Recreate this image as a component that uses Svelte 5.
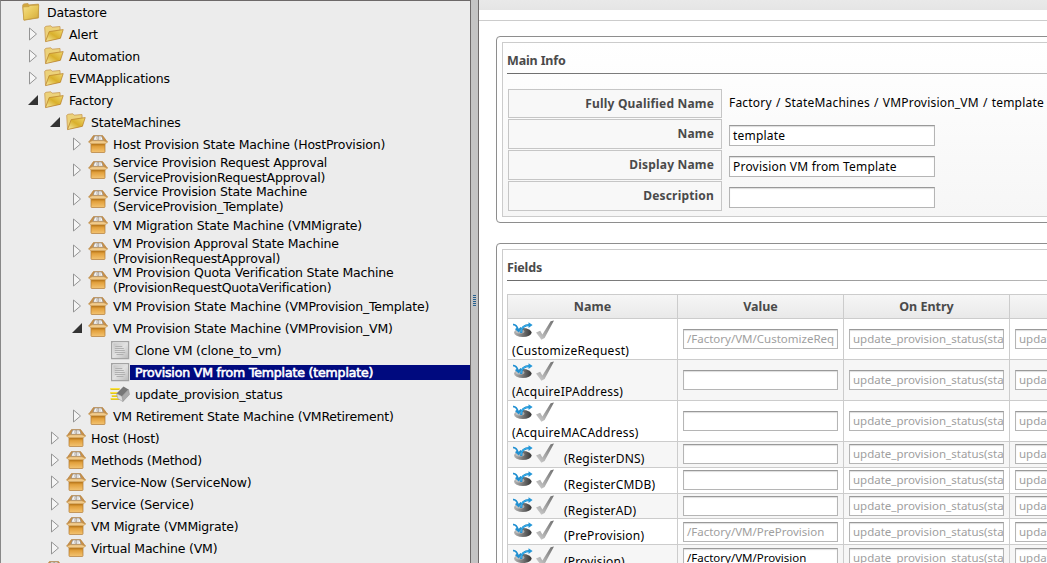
<script>
  const tree = [
    { level: 0, icon: 'closed', text: ['Datastore'] },
    { level: 1, icon: 'open', arrow: 'right', text: ['Alert'] },
    { level: 1, icon: 'open', arrow: 'right', text: ['Automation'] },
    { level: 1, icon: 'open', arrow: 'right', text: ['EVMApplications'] },
    { level: 1, icon: 'open', arrow: 'down', text: ['Factory'] },
    { level: 2, icon: 'open', arrow: 'down', text: ['StateMachines'] },
    { level: 3, icon: 'box', arrow: 'right', text: ['Host Provision State Machine (HostProvision)'] },
    { level: 3, icon: 'box', arrow: 'right', text: ['Service Provision Request Approval', '(ServiceProvisionRequestApproval)'] },
    { level: 3, icon: 'box', arrow: 'right', text: ['Service Provision State Machine', '(ServiceProvision_Template)'] },
    { level: 3, icon: 'box', arrow: 'right', text: ['VM Migration State Machine (VMMigrate)'] },
    { level: 3, icon: 'box', arrow: 'right', text: ['VM Provision Approval State Machine', '(ProvisionRequestApproval)'] },
    { level: 3, icon: 'box', arrow: 'right', text: ['VM Provision Quota Verification State Machine', '(ProvisionRequestQuotaVerification)'] },
    { level: 3, icon: 'box', arrow: 'right', text: ['VM Provision State Machine (VMProvision_Template)'] },
    { level: 3, icon: 'box', arrow: 'down', text: ['VM Provision State Machine (VMProvision_VM)'] },
    { level: 4, icon: 'instance', text: ['Clone VM (clone_to_vm)'] },
    { level: 4, icon: 'instance', selected: true, text: ['Provision VM from Template (template)'] },
    { level: 4, icon: 'method', text: ['update_provision_status'] },
    { level: 3, icon: 'box', arrow: 'right', text: ['VM Retirement State Machine (VMRetirement)'] },
    { level: 2, icon: 'box', arrow: 'right', text: ['Host (Host)'] },
    { level: 2, icon: 'box', arrow: 'right', text: ['Methods (Method)'] },
    { level: 2, icon: 'box', arrow: 'right', text: ['Service-Now (ServiceNow)'] },
    { level: 2, icon: 'box', arrow: 'right', text: ['Service (Service)'] },
    { level: 2, icon: 'box', arrow: 'right', text: ['VM Migrate (VMMigrate)'] },
    { level: 2, icon: 'box', arrow: 'right', text: ['Virtual Machine (VM)'] },
    { level: 1, icon: 'box', text: [''] }
  ];

  const info = [
    { label: 'Fully Qualified Name', text: 'Factory / StateMachines / VMProvision_VM / template' },
    { label: 'Name', value: 'template' },
    { label: 'Display Name', value: 'Provision VM from Template' },
    { label: 'Description', value: '' }
  ];

  const fields = [
    { name: '(CustomizeRequest)', value: '/Factory/VM/CustomizeReq', h: 41 },
    { name: '(AcquireIPAddress)', value: '', h: 41 },
    { name: '(AcquireMACAddress)', value: '', h: 41 },
    { name: '(RegisterDNS)', value: '', h: 26 },
    { name: '(RegisterCMDB)', value: '', h: 26 },
    { name: '(RegisterAD)', value: '', h: 25 },
    { name: '(PreProvision)', value: '/Factory/VM/PreProvision', h: 26, low: true },
    { name: '(Provision)', value: '/Factory/VM/Provision', own: true, h: 26, low: true }
  ];
  const entry = 'update_provision_status(sta';
</script>

<svg class="defs" width="0" height="0">
  <defs>
    <linearGradient id="gold" x1="0" y1="0" x2="1" y2="1">
      <stop offset="0" stop-color="#f5e08a" /><stop offset=".5" stop-color="#e8c85a" /><stop offset="1" stop-color="#d2a93a" />
    </linearGradient>
    <linearGradient id="flap" x1="0" y1="1" x2="1" y2="0">
      <stop offset="0" stop-color="#f8eda6" /><stop offset=".5" stop-color="#d9b02c" /><stop offset="1" stop-color="#f0d870" />
    </linearGradient>
    <linearGradient id="carton" x1="0" y1="0" x2="0" y2="1">
      <stop offset="0" stop-color="#c98722" /><stop offset=".45" stop-color="#e5a543" /><stop offset="1" stop-color="#f3c473" />
    </linearGradient>
    <linearGradient id="silver" x1="0" y1="0" x2="1" y2="1">
      <stop offset="0" stop-color="#bdbdbd" /><stop offset=".5" stop-color="#e2e2e2" /><stop offset="1" stop-color="#b9b9b9" />
    </linearGradient>
    <linearGradient id="disc" x1="0" y1="0" x2="1" y2="0">
      <stop offset="0" stop-color="#b5b5b5" /><stop offset=".5" stop-color="#777" /><stop offset="1" stop-color="#353535" />
    </linearGradient>
    <linearGradient id="tick" x1="0" y1="1" x2="1" y2="0">
      <stop offset="0" stop-color="#d5d5d5" /><stop offset=".45" stop-color="#a5a5a5" /><stop offset="1" stop-color="#707070" />
    </linearGradient>
  </defs>
</svg>

{#snippet treeIcon(kind)}
  <svg class="icon" width="20" height="20" viewBox="0 0 20 20">
    {#if kind === 'closed'}
      <path d="M.6 3.5 1.5 2 6 1.6l1.2 1.3 9.3-.8.1 13.8L2 18.2Z" fill="#d4a93f" stroke="#c49b4c" stroke-width=".8" />
      <path d="M1 5 7 4.6 8 3.4 16.8 3 16 15.6 1.8 18Z" fill="url(#gold)" stroke="#bd963c" stroke-width=".6" />
    {:else if kind === 'open'}
      <path d="M.7 3.3 2 2.3l4.8-.5L8 3.2l8-.7.4 11.5L1.5 17Z" fill="#ecd27a" stroke="#c99a55" stroke-width=".8" />
      <path d="M5.2 7.6 19.2 5.6 16.4 14.3 1.5 17.6Z" fill="url(#flap)" stroke="#bd8730" stroke-width=".8" />
    {:else if kind === 'box'}
      <path d="M5.4 1.6h9.2L19.4 8H.8Z" fill="#c99048" stroke="#b07a35" stroke-width=".6" />
      <path d="M4.4 7.2 6.4 1.8h7.4l2 5.4Z" fill="#a0968a" />
      <path d="M5.8 5.7 7 2.5h2.5v3.2ZM10.7 5.7V2.5h2.6l1.2 3.2Z" fill="#fff" />
      <path d="M8.3 3v2.2M12 3v2.2" stroke="#999" stroke-width=".6" />
      <path d="M3 9.2h14v8.6q0 .7-.8.7H3.8q-.8 0-.8-.7Z" fill="url(#carton)" stroke="#b07a35" stroke-width=".7" />
      <path d="M.6 8 4.4 6.7h11.2L19.6 8l-2.3 1.8H3Z" fill="#f2cb8b" stroke="#c3924e" stroke-width=".6" />
      <path d="M3.6 10.1h12.9v1.2H3.6Z" fill="#bb7a1f" />
    {:else if kind === 'instance'}
      <path d="M1.6 1.6h17v17h-17Z" fill="url(#silver)" stroke="#a3a3a3" stroke-width="1.2" />
      <path d="M2.8 17.5V2.8h14.7" fill="none" stroke="#e0e0e0" />
      <path d="M5.3 6.5h7M4.8 8.5h9M4.8 10.5h10M4.8 12.5h10.5M6.5 14.5h7" stroke="#b0b0b0" stroke-width="1" />
    {:else}
      <path d="M.5 5h9M.5 9h7M1.8 12h6M.8 15h8.5" stroke="#d9bd28" stroke-width="2" />
      <path d="M.5 4.6h9M.5 8.6h7M2 11.7h6M.8 14.7h8" stroke="#ffe83d" stroke-width="1" />
      <path d="m6.5 9.5 7-7 5 3-6.5 7Z" fill="#777" />
      <path d="m12 12.5 6.5-7 1 5-6.6 7Z" fill="#aaa" stroke="#888" stroke-width=".5" />
      <path d="m6.5 9.5 5.5 3 .9 5-5-2.8Z" fill="#dcdcdc" stroke="#919191" stroke-width=".5" />
    {/if}
  </svg>
{/snippet}

<div class="app">
  <aside>
    {#each tree as node}
      <div class="node" class:tall={node.text.length > 1} style="padding-left: {4 + node.level * 22}px">
        <span class="arrow">
          {#if node.arrow === 'right'}
            <svg width="12" height="14" viewBox="0 0 12 14"><path d="M2.5 1v12L9.5 7Z" fill="#f5f5f5" stroke="#949494" /></svg>
          {:else if node.arrow === 'down'}
            <svg width="12" height="14" viewBox="0 0 12 14"><path d="M11 2v10H1Z" fill="#333" /></svg>
          {/if}
        </span>
        {@render treeIcon(node.icon)}
        <span class="label" class:selected={node.selected}>
          {#each node.text as line}<span>{line}</span>{/each}
        </span>
      </div>
    {/each}
  </aside>
  <div class="splitter"><i></i></div>
  <main>
    <div class="band"></div>
    <div class="strip"></div>
    <section class="panel">
      <div class="inner main-info">
        <h3>Main Info</h3>
        <div class="info">
          {#each info as row}
            <div class="info-label">{row.label}</div>
            <div class="info-value">
              {#if row.text}<span>{row.text}</span>{:else}<div class="box wide">{row.value}</div>{/if}
            </div>
          {/each}
        </div>
      </div>
    </section>
    <section class="panel second">
      <div class="inner">
        <h3>Fields</h3>
        <div class="table">
          <div class="row head"><b>Name</b><b>Value</b><b>On Entry</b><b></b></div>
          {#each fields as f, i}
            <div class="row" class:alt={i % 2} class:high={f.h > 30} class:low={f.low} style="height: {f.h}px">
              <div class="name">
                <span class="marks">
                  <svg width="20" height="17" viewBox="0 0 20 17">
                    <ellipse cx="9.8" cy="10.6" rx="8.8" ry="4.5" fill="url(#disc)" />
                    <ellipse cx="7" cy="9.4" rx="4.4" ry="2" fill="#dcdcdc" opacity=".55" />
                    <path d="M0 2.6C3 2 4.2 4.5 5.5 8.4M2.6 6.6l3.1 2.6L8 5.4" fill="none" stroke="#2090d2" stroke-width="1.7" />
                    <path d="M8.2 11C8 6 11 2.9 17 3" fill="none" stroke="#1a82c4" stroke-width="2.1" />
                    <path d="M8.2 10.5C8 6 11 2.9 17 3" fill="none" stroke="#35aeea" stroke-width="1.2" />
                    <path d="M15.5.2 19.6 3l-4.1 3Z" fill="#2497d8" />
                  </svg>
                  <svg width="19" height="20" viewBox="0 0 19 20">
                    <path d="M0 12.6 4.2 10.8l2.2 3.6L14.6 1.3 18 .4 8.6 18l-3.2 1.8Z" fill="url(#tick)" />
                  </svg>
                </span>
                <span class="fname">{f.name}</span>
              </div>
              <div class="cell"><div class="box" class:own={f.own}>{f.value}</div></div>
              <div class="cell"><div class="box">{entry}</div></div>
              <div class="cell"><div class="box">{entry}</div></div>
            </div>
          {/each}
        </div>
      </div>
    </section>
  </main>
</div>

<style>
  :global(body) { background: #fff; overflow: hidden; }
  .defs { position: absolute; }
  .app { display: flex; width: 1047px; height: 563px; overflow: hidden; font-family: 'Noto Sans', sans-serif; font-size: 12px; color: #000; }
  svg { display: block; flex: none; }

  aside { box-sizing: border-box; width: 470px; height: 563px; flex: none; overflow: hidden; background: #ececec; border-top: 1px solid #6d6969; border-left: 1px solid #888; font-family: 'DejaVu Sans', sans-serif; font-size: 12.5px; letter-spacing: -.19px; }
  .node { display: flex; align-items: center; height: 22px; box-sizing: border-box; }
  .tall { height: 29.5px; }
  .arrow { width: 17px; height: 14px; flex: none; }
  .icon { margin-left: -.5px; margin-right: .5px; }
  .label { display: flex; flex-direction: column; flex: 1; padding-left: 5px; line-height: 15px; white-space: nowrap; }
  .selected { background: #000a7f; color: #fff; -webkit-text-stroke: .6px #fff; letter-spacing: -.15px; }

  .splitter { box-sizing: border-box; width: 9px; flex: none; background: #c4c4c4; border: solid #6d6969; border-width: 0 1px; display: flex; justify-content: center; align-items: center; padding-top: 38px; }
  .splitter i { width: 3px; height: 11px; background: repeating-linear-gradient(#26608f 0 1px, #c4c4c4 1px 2px); }

  main { flex: 1; min-width: 0; overflow: hidden; background: #fff; }
  .band { height: 10px; background: linear-gradient(#e9e9e9, #e5e5e5); }
  .strip { height: 10px; border-bottom: 1px solid #ccc; }
  .panel { box-sizing: border-box; width: 640px; margin: 15px 0 0 17px; border: 1px solid #8e8e8e; border-radius: 4px; padding: 5px; }
  .second { margin-top: 20px; }
  .inner { box-sizing: border-box; border: 1px solid #ccc; padding-left: 4px; }
  .main-info { height: 175px; background: linear-gradient(#fff, #f6f6f6); }
  h3 { margin: 0; height: 30px; line-height: 36px; font-size: 12.5px; letter-spacing: -.15px; color: #4a4a4a; border-bottom: 1px solid; border-image: linear-gradient(90deg, #6c6c6c, #bbb 560px) 1; }
  .info { display: grid; grid-template-columns: 214px auto; grid-template-rows: 29px 30px 30px 30px; row-gap: 1px; padding: 15px 0 0 1px; }
  .info-label { box-sizing: border-box; border: 1px solid #c6c6c6; background: #f8f8f8; text-align: right; padding-right: 7px; font-weight: bold; color: #4a4a4a; line-height: 27px; letter-spacing: .18px; }
  .info-value { padding-left: 7px; line-height: 28px; white-space: nowrap; font-size: 12px; letter-spacing: .2px; }
  .info-value span { word-spacing: .8px; }
  .box { box-sizing: border-box; width: 155px; height: 20px; border: 1px solid; border-color: #999 #b5b5b5 #b5b5b5; box-shadow: inset 0 1px 1px #ddd; background: #fff; color: #a0a0a0; padding-left: 3px; line-height: 18px; font-size: 11.5px; letter-spacing: 0; white-space: nowrap; overflow: hidden; }
  .wide { width: 206px; height: 21px; margin-top: 6px; line-height: 20px; color: #000; font-size: 12px; letter-spacing: .2px; }
  .own { color: #000; }

  .table { margin-top: 13px; border-top: 1px solid #ccc; border-left: 1px solid #ccc; }
  .row { display: grid; grid-template-columns: 170px 166px 166px 166px; box-sizing: border-box; border-bottom: 1px solid #ccc; background: #fff; }
  .row > * { box-sizing: border-box; border-right: 1px solid #ccc; }
  .head { height: 24px; background: linear-gradient(#f6f6f6, #e9e9e9); color: #4a4a4a; text-align: center; line-height: 23px; font-size: 12.5px; }
  .alt { background: #f6f6f6; }
  .name { display: flex; padding: 1px 0 0 4px; font-size: 12px; letter-spacing: .18px; }
  .marks { display: flex; gap: 3px; padding-left: 1px; flex: none; }
  .marks svg:first-child { margin-top: 2px; }
  .fname { margin-left: 9px; line-height: 16px; padding-top: 8px; }
  .high .name { flex-direction: column; letter-spacing: .28px; }
  .high .fname { margin: 0; padding: 3px 0 0; }
  .cell { padding: 2px 0 0 5px; }
  .high .cell { padding-top: 10px; }
  .low .cell { padding-top: 3px; }
</style>
